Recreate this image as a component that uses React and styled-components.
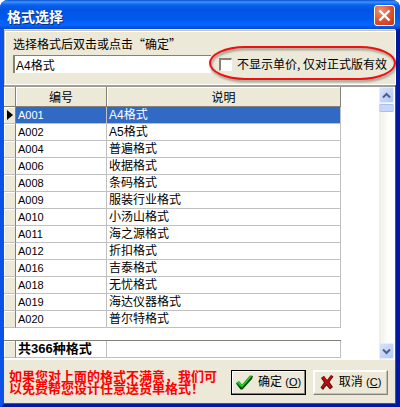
import React, { useState } from 'react'
import styled, { createGlobalStyle } from 'styled-components'

const formats = [
  { code: 'A001', name: 'A4格式' },
  { code: 'A002', name: 'A5格式' },
  { code: 'A004', name: '普遍格式' },
  { code: 'A006', name: '收据格式' },
  { code: 'A008', name: '条码格式' },
  { code: 'A009', name: '服装行业格式' },
  { code: 'A010', name: '小汤山格式' },
  { code: 'A011', name: '海之源格式' },
  { code: 'A012', name: '折扣格式' },
  { code: 'A016', name: '吉泰格式' },
  { code: 'A018', name: '无忧格式' },
  { code: 'A019', name: '海达仪器格式' },
  { code: 'A020', name: '普尔特格式' },
]

const GlobalStyle = createGlobalStyle`
  :root {
    --face: #ece9d8;
    --blue: #0a52ea;
    --navy: #0019a5;
    --line: #c0c0c0;
    --shadow: #848278;
    --select: #316ac5;
    --cjk: 'Noto Sans CJK SC', sans-serif;
    --mixed: 'Liberation Sans', 'Noto Sans CJK SC', sans-serif;
  }
  * {
    box-sizing: border-box;
  }
  body {
    margin: 0;
    background: #fff;
    color: #000;
    font: 12px/16px var(--cjk);
  }
  button,
  input {
    margin: 0;
    font: inherit;
    color: inherit;
  }
`

const Window = styled.form`
  display: flex;
  flex-direction: column;
  min-height: 100vh;
  background: var(--face);
  border: solid;
  border-width: 0 4px 4px;
  border-color: var(--blue) var(--navy) var(--navy) var(--blue);
  border-radius: 8px 8px 0 0;
  box-shadow: inset -1px -1px 0 #1c54e8;
`
const TitleBar = styled.header`
  display: flex;
  align-items: center;
  justify-content: space-between;
  height: 29px;
  margin: 0 -4px;
  padding: 2px 5px 0 7px;
  border-radius: 8px 8px 0 0;
  background: linear-gradient(
    #0a4fd0 0,
    #3c92fc 2px,
    #0860ee 5px,
    #0054e3 10px,
    #0058ee 18px,
    #0566ff 25px,
    #0248cc 29px
  );
`
const Title = styled.h1`
  margin: 0;
  font-size: 14px;
  line-height: 20px;
  font-weight: 700;
  color: #fff;
  text-shadow: 1px 1px 0 #0b2f86;
`
const Close = styled.button`
  display: grid;
  place-items: center;
  width: 21px;
  height: 21px;
  padding: 0;
  border: 1px solid #fff;
  border-radius: 3px;
  background: radial-gradient(circle at 30% 25%, #ec9479, #dc5030 55%, #bf3715);
`

const Panel = styled.section`
  padding: 4px 0 11px 8px;
  margin-top: 1px;
  border: 1px solid #c5c2b4;
  border-right-color: #fff;
  border-bottom-color: #fff;
  box-shadow: inset 1px 1px 0 #fff;
`
const Hint = styled.label`
  display: block;
  line-height: 18px;
  padding-bottom: 2px;
`
const Fields = styled.div`
  display: flex;
  align-items: center;
`
const TextBox = styled.input`
  flex: 1;
  min-width: 0;
  height: 18px;
  padding: 0 1px;
  border: 0;
  border-top: 1px solid var(--shadow);
  border-left: 2px solid var(--shadow);
  background: #fff;
  font-family: var(--mixed);
  outline: none;
`
const Option = styled.label`
  position: relative;
  display: flex;
  align-items: center;
  gap: 5px;
  padding: 0 8px;
  line-height: 18px;
  white-space: nowrap;
`
const Ring = styled.span`
  position: absolute;
  inset: -9px -1px -7px -2px;
  border: 2px solid #f01010;
  border-radius: 36px / 17px;
  filter: drop-shadow(1px 2px 1px rgba(0, 0, 0, 0.4));
  pointer-events: none;
`
const Tick = styled.input`
  appearance: none;
  width: 13px;
  height: 13px;
  border: solid;
  border-width: 2px 1px 1px 2px;
  border-color: var(--shadow) #fff #fff var(--shadow);
  background: #fff;
  &:checked {
    box-shadow: inset 0 0 0 2px #fff;
    background: #000;
  }
`

const List = styled.section`
  flex: 1;
  display: flex;
  margin-right: 1px;
  border-top: 2px solid #a09d92;
  background: #fff;
`
const Grid = styled.div`
  flex: 1;
  padding: 0 38px 2px 0;
`
const Table = styled.table`
  width: 100%;
  table-layout: fixed;
  border-collapse: separate;
  border-spacing: 0;
`
const Column = styled.col`
  width: ${p => p.$width}px;
`
const Heading = styled.th`
  height: 20px;
  padding: 0;
  border-right: 1px solid var(--shadow);
  border-bottom: 1px solid var(--shadow);
  background: var(--face);
  box-shadow: inset 1px 1px 0 #fff;
  font-weight: 400;
`
const Marker = styled.td`
  height: 17px;
  padding: 0 0 0 3px;
  border-right: 1px solid var(--shadow);
  border-bottom: 1px solid var(--line);
  background: var(--face);
  box-shadow: inset 1px 1px 0 #fff;
  line-height: 0;
`
const Cell = styled.td`
  height: 17px;
  padding: 0 2px;
  border-right: 1px solid var(--line);
  border-bottom: 1px solid var(--line);
  font-family: var(--mixed);
  font-size: ${p => (p.$code ? 11 : 12)}px;
  white-space: nowrap;
`
const Row = styled.tr`
  background: ${p => (p.$selected ? 'var(--select)' : '#fff')};
  color: ${p => (p.$selected ? '#fff' : '#000')};
  cursor: default;
`
const Gap = styled.td`
  height: 13px;
  padding: 0;
  border-bottom: 1px solid var(--shadow);
`
const Total = styled(Cell)`
  font-size: 13px;
  line-height: 16px;
  font-weight: 700;
`

const ScrollBar = styled.div`
  display: flex;
  flex-direction: column;
  justify-content: space-between;
  width: 16px;
  padding-bottom: 1px;
  background: linear-gradient(90deg, #f0efe6, #fefefb 60%);
`
const ScrollButton = styled.button`
  display: grid;
  place-items: center;
  width: 15px;
  height: 16px;
  padding: 0;
  border: 1px solid #e6edfc;
  border-radius: 2px;
  background: linear-gradient(135deg, #d6e2fe, #b4c8f6);
`
const Thumb = styled.div`
  width: 15px;
  height: 8px;
  margin-top: 1px;
  border: 1px solid #aabff0;
  border-width: 1px 0;
  border-radius: 2px;
  background: #c6d5fc;
`

const Footer = styled.footer`
  display: flex;
  align-items: center;
  gap: 7px;
  min-height: 44px;
  padding: 0 8px 0 5px;
`
const Notice = styled.p`
  flex: 1;
  margin: 0;
  color: #f00;
  font-size: 13px;
  line-height: 12px;
  font-weight: 700;
`
const Button = styled.button`
  display: flex;
  align-items: center;
  justify-content: center;
  gap: 5px;
  width: 75px;
  height: 25px;
  padding: 0;
  border: 1px solid;
  border-color: ${p => (p.$primary ? '#000' : '#fff var(--shadow) var(--shadow) #fff')};
  background: var(--face);
  box-shadow: inset -1px -1px 0 ${p => (p.$primary ? 'var(--shadow)' : '#c5c2b4')},
    inset 1px 1px 0 #fff;
  font-family: var(--mixed);
  white-space: nowrap;
`
const Key = styled.span`
  font-size: 11px;
`

const Chevron = ({ up }) => (
  <svg width="9" height="7" viewBox="0 0 9 7" fill="none" stroke="#4d6185" strokeWidth="2">
    <path d={up ? 'M1 5.5 4.5 2 8 5.5' : 'M1 1.5 4.5 5 8 1.5'} />
  </svg>
)

const CheckIcon = () => (
  <svg width="17" height="15" viewBox="0 0 17 15">
    <path d="M0 8.5 3 6.5 6 10 14 1 17 1 16 4 6.5 14.5 4.5 14.5Z" fill="#123c14" />
    <path d="M0 8 3 6 6 9.5 14 .5 16.5 .5 6 13Z" fill="#09b312" />
    <path d="M2.5 7 6 11 15 1.5" fill="none" stroke="#3be044" />
  </svg>
)

const CrossIcon = () => (
  <svg width="14" height="15" viewBox="0 0 14 15">
    <path
      d="M1 3 4 1 7 5 11 0 13.5 1.5 9.5 7 13 12 10 14.5 6.5 10.5 3 15 .5 12.5 4 7.5Z"
      fill="#5c0808"
    />
    <path d="M1.5 2.5 4 1 7 5.5 11 .5 12.5 1.5 8.5 7 12 12 10 13.5 6.5 9 3 13.5 1 12 5 7.5Z" fill="#b50d0d" />
  </svg>
)

const App = () => {
  const [selected, setSelected] = useState(0)
  const [hidePrice, setHidePrice] = useState(false)

  return (
    <>
      <GlobalStyle />
      <Window onSubmit={e => e.preventDefault()}>
        <TitleBar>
          <Title>格式选择</Title>
          <Close type="button" aria-label="关闭">
            <svg width="13" height="13" viewBox="0 0 13 13" stroke="#fff" strokeWidth="2.4">
              <path d="M1.5 1.5 11.5 11.5M11.5 1.5 1.5 11.5" />
            </svg>
          </Close>
        </TitleBar>

        <Panel>
          <Hint htmlFor="format">选择格式后双击或点击“确定”</Hint>
          <Fields>
            <TextBox id="format" value={formats[selected].name} readOnly />
            <Option>
              <Tick
                type="checkbox"
                checked={hidePrice}
                onChange={e => setHidePrice(e.target.checked)}
              />
              不显示单价, 仅对正式版有效
              <Ring />
            </Option>
          </Fields>
        </Panel>

        <List>
          <Grid>
            <Table>
              <colgroup>
                <Column $width={12} />
                <Column $width={91} />
                <col />
              </colgroup>
              <thead>
                <tr>
                  <Heading />
                  <Heading>编号</Heading>
                  <Heading>说明</Heading>
                </tr>
              </thead>
              <tbody>
                {formats.map(({ code, name }, i) => (
                  <Row key={code} $selected={i === selected} onClick={() => setSelected(i)}>
                    <Marker>
                      {i === selected && (
                        <svg width="6" height="10" viewBox="0 0 6 10">
                          <path d="M0 0 6 5 0 10Z" />
                        </svg>
                      )}
                    </Marker>
                    <Cell $code>{code}</Cell>
                    <Cell>{name}</Cell>
                  </Row>
                ))}
              </tbody>
              <tfoot>
                <tr>
                  <Gap colSpan={3} />
                </tr>
                <tr>
                  <Marker />
                  <Total>共366种格式</Total>
                  <Cell />
                </tr>
              </tfoot>
            </Table>
          </Grid>
          <ScrollBar>
            <div>
              <ScrollButton type="button" aria-label="向上">
                <Chevron up />
              </ScrollButton>
              <Thumb />
            </div>
            <ScrollButton type="button" aria-label="向下">
              <Chevron />
            </ScrollButton>
          </ScrollBar>
        </List>

        <Footer>
          <Notice>如果您对上面的格式不满意，我们可以免费帮您设计任意送货单格式！</Notice>
          <Button type="submit" $primary>
            <CheckIcon />
            <span>
              确定 <Key>(<u>O</u>)</Key>
            </span>
          </Button>
          <Button type="button">
            <CrossIcon />
            <span>
              取消 <Key>(<u>C</u>)</Key>
            </span>
          </Button>
        </Footer>
      </Window>
    </>
  )
}

export default App
